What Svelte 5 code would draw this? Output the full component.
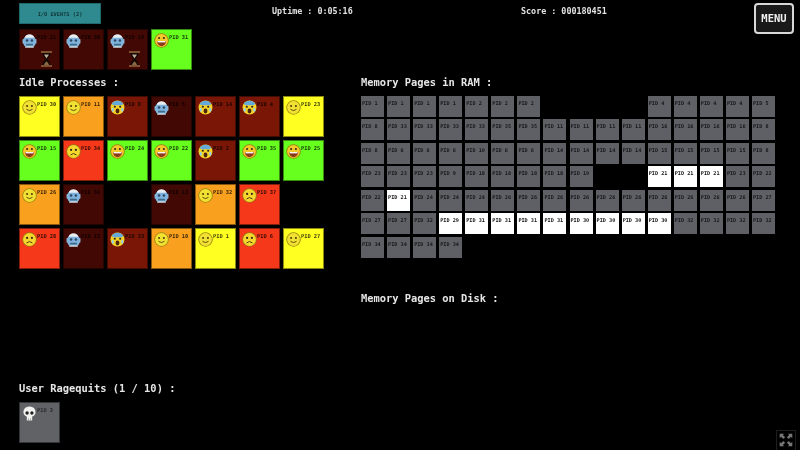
<script>
	const blocked = [
		{ face: 'robot', pid: 21, tone: 'dark', wait: true },
		{ face: 'robot', pid: 30, tone: 'dark' },
		{ face: 'robot', pid: 19, tone: 'dark', wait: true },
		{ face: 'grin', pid: 31, tone: 'green' }
	]

	const tones = { smile: 'yellow', grin: 'green', sad: 'red', cry: 'maroon', robot: 'dark' }
	const t = (face, pid, tone) => ({ face, pid, tone: tone || tones[face] })

	const idle = [
		t('smile', 30), t('smile', 11, 'orange'), t('cry', 8), t('robot', 5), t('cry', 14), t('cry', 4), t('smile', 23),
		t('grin', 15), t('sad', 34), t('grin', 24), t('grin', 22), t('cry', 2), t('grin', 35), t('grin', 25),
		t('smile', 26, 'orange'), t('robot', 36), null, t('robot', 13), t('smile', 32, 'orange'), t('sad', 37), null,
		t('sad', 28), t('robot', 13), t('cry', 33), t('smile', 10, 'orange'), t('smile', 1), t('sad', 6), t('smile', 27)
	]

	// "w" marks a page that is being touched, "." a free frame
	const ram = [
		'1 1 1 1 2 2 2 . . . . 4 4 4 4 5',
		'8 33 33 33 33 35 35 11 11 11 11 16 16 16 16 8',
		'8 6 6 6 10 6 6 14 14 14 14 15 15 15 15 8',
		'23 23 23 9 18 18 18 18 19 . . 21w 21w 21w 23 22',
		'22 21w 24 24 24 26 26 26 26 26 26 26 26 26 26 27',
		'27 27 32 29w 31w 31w 31w 31w 30w 30w 30w 30w 32 32 32 32',
		'34 34 34 34'
	].flatMap(row => row.split(' '))
</script>

{#snippet face(kind)}
	<svg class="face" viewBox="0 0 28 28">
		{#if kind === 'robot'}
			<rect x="1" y="11" width="4" height="9" rx="1.5" fill="#8fb8d8" />
			<rect x="23" y="11" width="4" height="9" rx="1.5" fill="#8fb8d8" />
			<rect x="3" y="6" width="22" height="20" rx="7" fill="#7fb2dc" />
			<path d="M5 9 C6 0 22 0 23 9 Z" fill="#e8eef0" />
			<circle cx="9.5" cy="14" r="2.4" fill="#2a4a64" />
			<circle cx="18.5" cy="14" r="2.4" fill="#2a4a64" />
			<rect x="7.5" y="20" width="13" height="3.5" rx="1" fill="#3f6a88" />
			<path d="M6 25 h16 v2.5 h-16 Z" fill="#d8e4ea" />
		{:else if kind === 'cry'}
			<circle cx="14" cy="14" r="13" fill="#f5d327" />
			<path d="M3.2 7 A13 13 0 0 1 24.8 7 L22 10 H6 Z" fill="#63a9dc" />
			<circle cx="9" cy="12.5" r="2" fill="#33261a" />
			<circle cx="19" cy="12.5" r="2" fill="#33261a" />
			<ellipse cx="14" cy="20.5" rx="3.6" ry="4.6" fill="#4a2412" />
			<path d="M4 15 q-2.5 6 1 7 q3.5 -1 1 -7 Z M24 15 q2.5 6 -1 7 q-3.5 -1 -1 -7 Z" fill="#8ed0f5" />
		{:else if kind === 'grin'}
			<circle cx="14" cy="14" r="13.5" fill="#9a7a10" />
			<circle cx="14" cy="14" r="12" fill="#f4c92a" />
			<circle cx="9.5" cy="9.5" r="1.9" fill="#33261a" />
			<circle cx="18.5" cy="9.5" r="1.9" fill="#33261a" />
			<path d="M5.5 15 H22.5 C22.5 21 18 24.5 14 24.5 C10 24.5 5.5 21 5.5 15 Z" fill="#8c3a1c" />
			<path d="M6.5 15 H21.5 V17.5 H6.5 Z" fill="#fff" />
		{:else if kind === 'sad'}
			<circle cx="14" cy="14" r="13.5" fill="#9a7a10" />
			<circle cx="14" cy="14" r="12" fill="#f4d62c" />
			<circle cx="9.5" cy="11" r="2" fill="#33261a" />
			<circle cx="18.5" cy="11" r="2" fill="#33261a" />
			<path d="M8.5 20.5 Q14 15 19.5 20.5" fill="none" stroke="#4a3410" stroke-width="1.8" />
		{:else}
			<circle cx="14" cy="14" r="13.5" fill="#9a8412" />
			<circle cx="14" cy="14" r="12" fill="#f2e032" />
			<circle cx="9.5" cy="11" r="1.9" fill="#4a3e10" />
			<circle cx="18.5" cy="11" r="1.9" fill="#4a3e10" />
			<path d="M8.5 17.5 Q14 22 19.5 17.5" fill="none" stroke="#5a4c10" stroke-width="1.8" />
		{/if}
	</svg>
{/snippet}

{#snippet tile(p)}
	<div class="tile {p.tone}">
		{@render face(p.face)}
		<span class="pid">PID {p.pid}</span>
		{#if p.wait}
			<svg class="hourglass" viewBox="0 0 11 16">
				<path d="M1.5 1 H9.5 C9.5 5.5 6.8 6.8 6.5 8 C6.8 9.2 9.5 10.5 9.5 15 H1.5 C1.5 10.5 4.2 9.2 4.5 8 C4.2 6.8 1.5 5.5 1.5 1 Z" fill="#140604" />
				<path d="M0 0 H11 V2 H0 Z M0 14 H11 V16 H0 Z" fill="#80522e" />
				<path d="M3.2 3.5 H7.8 C7.6 5 6 6.2 5.5 7.4 C5 6.2 3.4 5 3.2 3.5 Z" fill="#b9ab96" />
				<path d="M3 14 C3.5 12 4.6 11 5.5 10.5 C6.4 11 7.5 12 8 14 Z" fill="#8a6a48" />
			</svg>
		{/if}
	</div>
{/snippet}

<div class="screen">
	<header>
		<div class="events">I/O EVENTS (2)</div>
		<div class="uptime">Uptime : 0:05:16</div>
		<div class="score">Score : 000180451</div>
		<div class="menu">MENU</div>
	</header>

	<main>
		<section class="left">
			<div class="tiles">
				{#each blocked as p}
					{@render tile(p)}
				{/each}
			</div>
			<h2>Idle Processes :</h2>
			<div class="tiles">
				{#each idle as p}
					{#if p}
						{@render tile(p)}
					{:else}
						<div class="gap"></div>
					{/if}
				{/each}
			</div>
			<h2 class="quit-title">User Ragequits (1 / 10) :</h2>
			<div class="tiles">
				<div class="tile grey">
					<svg class="face" viewBox="0 0 28 28">
						<path d="M14 1 C5 1 2 8 3 14 C4 18 8 19 9 20 V27 H19 V20 C20 19 24 18 25 14 C26 8 23 1 14 1 Z" fill="#f2f2f0" />
						<circle cx="9.5" cy="13" r="3.2" fill="#222" />
						<circle cx="18.5" cy="13" r="3.2" fill="#222" />
						<path d="M12 23 V27 M16 23 V27" stroke="#666" stroke-width="1" />
					</svg>
					<span class="pid">PID 3</span>
				</div>
			</div>
		</section>

		<section class="right">
			<h2>Memory Pages in RAM :</h2>
			<div class="pages">
				{#each ram as page}
					{#if page === '.'}
						<div></div>
					{:else}
						<div class="page" class:hot={page.endsWith('w')}>PID {parseInt(page)}</div>
					{/if}
				{/each}
			</div>
			<h2 class="disk-title">Memory Pages on Disk :</h2>
		</section>
	</main>

	<div class="expand">
		<svg viewBox="0 0 20 20" width="18" height="18">
			<path d="M3 3 H8 L6.5 4.5 L9 7 L7 9 L4.5 6.5 L3 8 Z M17 3 V8 L15.5 6.5 L13 9 L11 7 L13.5 4.5 L12 3 Z M3 17 V12 L4.5 13.5 L7 11 L9 13 L6.5 15.5 L8 17 Z M17 17 H12 L13.5 15.5 L11 13 L13 11 L15.5 13.5 L17 12 Z" fill="#777" />
		</svg>
	</div>
</div>

<style>
	:global(body) {
		background: #000;
	}
	.screen {
		position: relative;
		width: 800px;
		height: 450px;
		overflow: hidden;
		background: #000;
		color: #e2e2e2;
		font-family: "DejaVu Sans Mono", monospace;
		font-weight: bold;
		filter: blur(0.45px);
	}
	header {
		display: flex;
		align-items: flex-start;
		height: 29px;
		padding-left: 19px;
		font-size: 8.4px;
	}
	.events {
		width: 82px;
		height: 21px;
		margin-top: 3px;
		line-height: 21px;
		text-align: center;
		font-size: 5.3px;
		color: #0f3336;
		background: #2f8a8f;
		border: 1px solid #1f6a6e;
		box-sizing: border-box;
	}
	.uptime {
		margin: 6px 0 0 171px;
		width: 249px;
	}
	.score {
		margin-top: 6px;
		width: 233px;
	}
	.menu {
		width: 40px;
		height: 31px;
		margin-top: 3px;
		box-sizing: border-box;
		line-height: 27px;
		text-align: center;
		font-size: 10.5px;
		color: #f0f0f0;
		background: #191919;
		border: 2px solid #d8d8d8;
		border-radius: 4px;
	}
	main {
		display: flex;
		padding-left: 19px;
	}
	.left {
		width: 342px;
	}
	.tiles {
		display: grid;
		grid-template-columns: repeat(7, 41px);
		grid-auto-rows: 41px;
		gap: 3px;
	}
	h2 {
		margin: 0;
		height: 26px;
		line-height: 25px;
		font-size: 10.4px;
		font-weight: bold;
		color: #e6e6e6;
	}
	.quit-title {
		margin-top: 107px;
		height: 26px;
	}
	.right {
		padding-top: 41px;
	}
	.pages {
		display: grid;
		grid-template-columns: repeat(16, 23px);
		grid-auto-rows: 21px;
		column-gap: 3.07px;
		row-gap: 2.45px;
	}
	.disk-title {
		margin-top: 28px;
	}
	.page {
		box-sizing: border-box;
		padding: 4px 0 0 1px;
		font-size: 5.2px;
		line-height: 6px;
		color: #17171a;
		background: #5f6065;
		white-space: nowrap;
	}
	.page.hot {
		color: #111;
		background: #fff;
	}
	.tile {
		position: relative;
		display: flex;
		align-items: flex-start;
		box-sizing: border-box;
		padding: 3px 0 0 2px;
		border: 1px solid rgba(0, 0, 0, 0.45);
	}
	.face {
		flex: none;
		width: 15px;
		height: 15px;
	}
	.pid {
		margin: 1px 0 0 0;
		font-size: 5.3px;
		line-height: 7px;
		color: rgba(0, 0, 0, 0.8);
		white-space: nowrap;
	}
	.hourglass {
		position: absolute;
		left: 21px;
		top: 21px;
		width: 11px;
		height: 16px;
	}
	.yellow { background: #ffff22; }
	.orange { background: #f9a01e; }
	.red { background: #f5371a; }
	.green { background: #66ff1e; }
	.maroon { background: #7a1605; }
	.dark { background: #420803; }
	.grey { background: #606266; }
	.grey .pid { color: #2a2a2e; }
	.expand {
		position: absolute;
		right: 4px;
		bottom: 0;
		width: 20px;
		height: 20px;
		box-sizing: border-box;
		border: 1px solid #1e1e1e;
		border-bottom: 0;
	}
	.expand svg {
		display: block;
	}
</style>
